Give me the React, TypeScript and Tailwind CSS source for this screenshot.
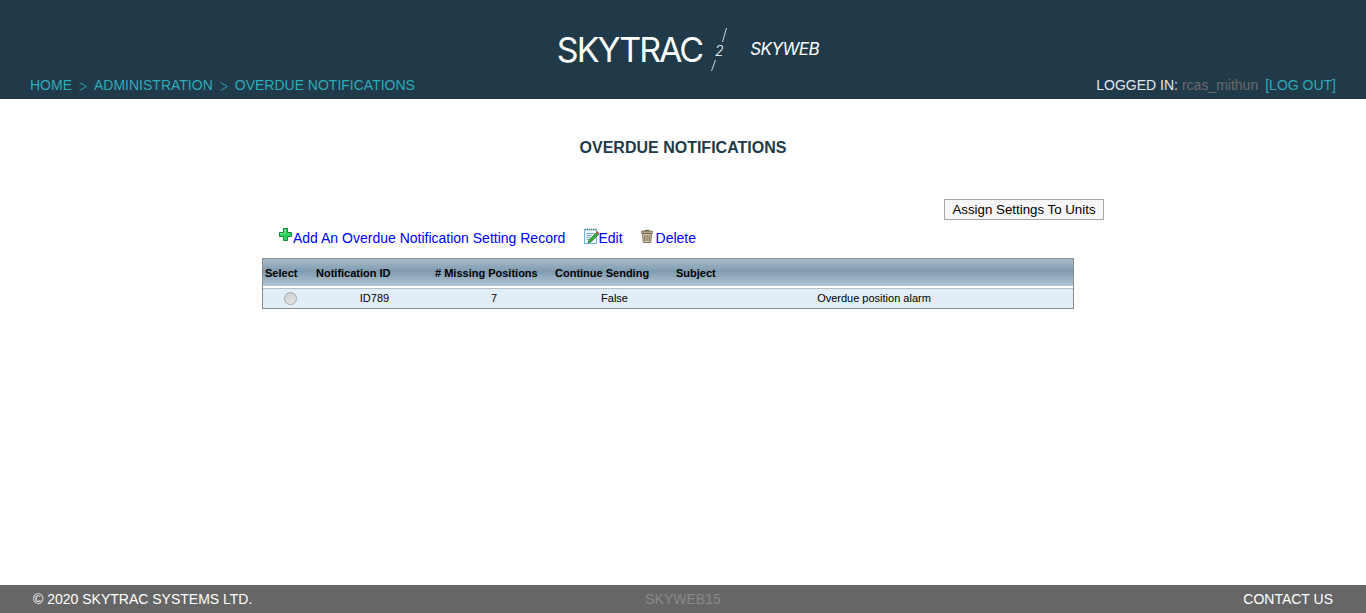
import React from 'react';

const PlusIcon = () => (
  <svg width="13" height="13" viewBox="0 0 13 13" className="shrink-0">
    <path d="M4.500.5h4v4h4v4h-4v4h-4v-4h-4v-4h4z" fill="#2fd060" stroke="#0b8a3a" strokeWidth="1" />
    <path d="M5.500 1.500h1v4h-4v1h-1v-1.500h4z" fill="#9ff0b5" />
  </svg>
);

const EditIcon = () => (
  <svg width="15" height="16" viewBox="0 0 15 16" className="shrink-0">
    <rect x="0.500" y="1.500" width="12" height="14" fill="#eaf5fc" stroke="#6fb3d9" />
    <path d="M1.500.5v2M3.500.5v2M5.500.5v2M7.500.5v2M9.500.5v2M11.500.5v2" stroke="#7a8a96" strokeWidth="1" />
    <path d="M2.500 5.500h8M2.500 7.500h5M2.500 9.500h4M2.500 11.500h3" stroke="#7fa8c4" strokeWidth="1" />
    <path d="M5 12l8-8 2 2-8 8-3 1z" fill="#3aa83f" stroke="#1f6b2a" strokeWidth="0.600" />
    <path d="M12 4.500l1.200-1.500 1.800 1.800-1.500 1.300z" fill="#d94c3a" />
  </svg>
);

const TrashIcon = () => (
  <svg width="12" height="14" viewBox="0 0 12 14" className="shrink-0">
    <path d="M4 1.500h4" stroke="#6b5a3c" strokeWidth="1.200" />
    <rect x="0.500" y="2" width="11" height="2.500" rx="1" fill="#b9ab8c" stroke="#5f513a" strokeWidth="0.800" />
    <path d="M1.500 4.500h9l-.8 9h-7.400z" fill="#d8cfb8" stroke="#5f513a" strokeWidth="0.800" />
    <path d="M3.800 6v6M6 6v6M8.200 6v6" stroke="#6b5a3c" strokeWidth="1" />
  </svg>
);

const Chevron = () => (
  <svg width="8" height="9" viewBox="0 0 8 9" className="mx-[7px] mt-px shrink-0">
    <path d="M.5.5l7 4-7 4" fill="none" stroke="#2eabb8" strokeWidth="0.900" />
  </svg>
);

const Logo = () => (
  <div className="flex items-center text-white">
    <span className="font-['Inter','Liberation_Sans',sans-serif] text-[34px] leading-none font-normal tracking-[-2px]">SKYTRAC</span>
    <div className="ml-[8px] flex h-[43px] w-[18px] flex-col items-center justify-between">
      <svg width="5" height="14" viewBox="0 0 5 14" className="ml-[10px]"><path d="M4.500 0L.5 14" stroke="#cfd6da" strokeWidth="1" /></svg>
      <span className="text-[14px] leading-none italic font-['Inter',sans-serif] font-light">2</span>
      <svg width="5" height="11" viewBox="0 0 5 11" className="mr-[11px]"><path d="M4.500 0L.5 11" stroke="#cfd6da" strokeWidth="1" /></svg>
    </div>
    <span className="ml-[22px] font-['Inter',sans-serif] text-[17px] leading-none italic font-normal tracking-[-0.500px]">SKYWEB</span>
  </div>
);

const Header = () => (
  <header className="relative flex h-[99px] shrink-0 flex-col bg-[#203a4a] px-[30px] text-[14px] leading-[17px]">
    <div className="flex h-[72px] items-end justify-center pb-[1px] pl-[10px]">
      <Logo />
    </div>
    <div className="mt-[5px] flex items-center justify-between">
      <nav className="flex items-center text-[#2eabb8]">
        <a href="#">HOME</a>
        <Chevron />
        <a href="#">ADMINISTRATION</a>
        <Chevron />
        <a href="#">OVERDUE NOTIFICATIONS</a>
      </nav>
      <div className="flex items-center">
        <span className="text-[#e4e8ea]">LOGGED IN:</span>
        <span className="ml-[4px] text-[#6b6b6b]">rcas_mithun</span>
        <a href="#" className="ml-[7px] text-[#2eabb8]">[LOG OUT]</a>
      </div>
    </div>
  </header>
);

const headers = [
  { label: 'Select', cls: 'w-[51px] pl-[2px]' },
  { label: 'Notification ID', cls: 'w-[121px] pl-[2px]' },
  { label: '# Missing Positions', cls: 'w-[120px]' },
  { label: 'Continue Sending', cls: 'w-[121px]' },
  { label: 'Subject', cls: 'w-[60px]' },
];

const NotificationTable = () => (
  <div className="w-[812px] border border-[#8c8c8c] text-[11px] leading-[13px] text-black">
    <div className="flex h-[27px] items-center bg-[linear-gradient(#a9bccb_0%,#7f9bb0_45%,#b3c4d1_100%)] pt-[2px] font-bold">
      {headers.map((h) => (
        <div key={h.label} className={`${h.cls} shrink-0 whitespace-nowrap`}>{h.label}</div>
      ))}
    </div>
    <div className="h-[2px] bg-white" />
    <div className="grid h-[20px] grid-cols-[54px_115px_124px_117px_402px] items-center border-t border-[#b5bfc7] bg-[#e1eef8] text-center">
      <div className="flex justify-center">
        <span className="h-[13px] w-[13px] rounded-full border border-[#a8a8a8] bg-[linear-gradient(#d0d0d0,#e4e4e4)]" />
      </div>
      <div>ID789</div>
      <div>7</div>
      <div>False</div>
      <div>Overdue position alarm</div>
    </div>
  </div>
);

const Main = () => (
  <main className="flex flex-1 flex-col bg-white font-['Liberation_Sans',Arial,sans-serif]">
    <h1 className="mt-[40px] text-center text-[16px] leading-[18px] font-bold text-[#203a4a]">OVERDUE NOTIFICATIONS</h1>
    <div className="mt-[42px] flex justify-end pr-[262px]">
      <button className="h-[21px] w-[160px] border border-[#a6a6a6] bg-[#f6f6f6] text-center text-[13.300px] leading-[17px] text-black">
        Assign Settings To Units
      </button>
    </div>
    <div className="mt-[5px] flex h-[24px] items-center pl-[279px] text-[14px] leading-[16px] text-[#0000ff]">
      <a href="#" className="flex items-end"><span className="mb-[5px]"><PlusIcon /></span><span className="ml-px">Add An Overdue Notification Setting Record</span></a>
      <a href="#" className="ml-[19px] flex items-end"><span className="mb-[2px]"><EditIcon /></span><span className="-ml-px">Edit</span></a>
      <a href="#" className="ml-[18px] flex items-end"><span className="mb-[3px]"><TrashIcon /></span><span className="ml-[3px]">Delete</span></a>
    </div>
    <div className="mt-[9px] pl-[262px]">
      <NotificationTable />
    </div>
  </main>
);

const Footer = () => (
  <footer className="grid h-[28px] shrink-0 grid-cols-3 items-center bg-[#666666] px-[33px] text-[14px] leading-[17px]">
    <div className="text-white">© 2020 SKYTRAC SYSTEMS LTD.</div>
    <div className="text-center text-[#8a8a8a]">SKYWEB15</div>
    <div className="text-right text-white"><a href="#">CONTACT US</a></div>
  </footer>
);

export default function App() {
  return (
    <div className="flex h-[613px] w-[1366px] flex-col overflow-hidden font-['Liberation_Sans',Arial,sans-serif]">
      <Header />
      <Main />
      <Footer />
    </div>
  );
}
